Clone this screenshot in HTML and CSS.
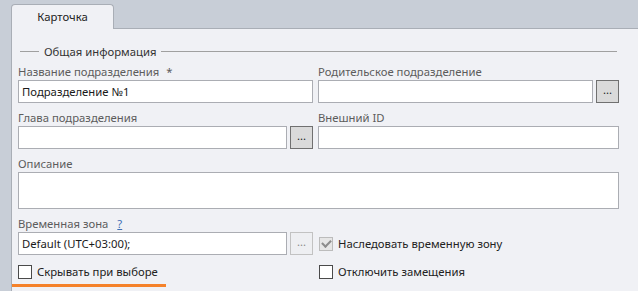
FILE: index.html
```html
<!DOCTYPE html>
<html lang="ru">
<head>
    <meta charset="UTF-8">
    <title>Карточка подразделения</title>
    <link rel="stylesheet" href="styles.css">
</head>
<body>
    <div class="tabs">
        <div class="tab">Карточка</div>
    </div>
    <div class="panel">
        <div class="legend"><span>Общая информация</span></div>
        <div class="grid">
            <div class="field">
                <label>Название подразделения <span class="req">*</span></label>
                <input type="text" value="Подразделение №1" readonly>
            </div>
            <div class="field">
                <label>Родительское подразделение</label>
                <div class="picker">
                    <input type="text" readonly>
                    <button>...</button>
                </div>
            </div>
            <div class="field">
                <label>Глава подразделения</label>
                <div class="picker">
                    <input type="text" readonly>
                    <button>...</button>
                </div>
            </div>
            <div class="field">
                <label>Внешний ID</label>
                <input type="text" readonly>
            </div>
            <div class="field wide">
                <label>Описание</label>
                <textarea readonly></textarea>
            </div>
            <div class="field">
                <label>Временная зона <a class="help">?</a></label>
                <div class="picker">
                    <input type="text" value="Default (UTC+03:00);" readonly>
                    <button disabled>...</button>
                </div>
            </div>
            <div class="field inherit">
                <div class="check">
                    <span class="box checked"></span>
                    <span>Наследовать временную зону</span>
                </div>
            </div>
            <div class="check-row">
                <div class="check focused">
                    <span class="box"></span>
                    <span>Скрывать при выборе</span>
                </div>
            </div>
            <div class="check-row">
                <div class="check">
                    <span class="box"></span>
                    <span>Отключить замещения</span>
                </div>
            </div>
        </div>
    </div>
</body>
</html>
```

FILE: styles.css
```css
html, body {
    margin: 0;
    height: 291px;
    overflow: hidden;
}
body {
    display: flex;
    flex-direction: column;
    background: #c8ced7;
    font-family: "Noto Sans", "Open Sans", sans-serif;
    font-size: 11.3px;
    color: #5c5c5c;
}
.tabs {
    display: flex;
    padding: 4px 0 0 11px;
}
.tab {
    width: 101px;
    height: 24px;
    line-height: 23px;
    text-align: center;
    color: #222222;
    background: #f0f1f5;
    border: 1px solid #a9aeb6;
    border-bottom: none;
    border-radius: 4px 4px 0 0;
    margin-bottom: -1px;
    position: relative;
    z-index: 1;
}
.panel {
    flex: 1;
    margin-left: 11px;
    background: #f0f1f5;
    border-top: 1px solid #a9aeb6;
    border-left: 1px solid #a9aeb6;
    padding: 14px 19px 0 6px;
}
.legend {
    display: flex;
    align-items: center;
    height: 16px;
    padding-left: 2px;
    margin-right: 2px;
    color: #333333;
}
.legend::before {
    content: "";
    width: 19px;
    border-top: 1px solid #a0a0a0;
    margin-right: 5px;
}
.legend::after {
    content: "";
    flex: 1;
    border-top: 1px solid #a0a0a0;
    margin-left: 5px;
}
.grid {
    display: grid;
    grid-template-columns: 295px 301px;
    column-gap: 5px;
    margin-top: 4px;
}
.field {
    display: flex;
    flex-direction: column;
    margin-bottom: 6px;
}
.field.wide {
    grid-column: 1 / 3;
}
label {
    line-height: 17px;
    height: 17px;
}
.req {
    margin-left: 4px;
}
.help {
    color: #3f6fb5;
    text-decoration: underline;
    margin-left: 6px;
}
input, textarea {
    box-sizing: border-box;
    height: 23px;
    width: 100%;
    margin: 0;
    padding: 0 3px;
    border: 1px solid #abadb3;
    background: #ffffff;
    font-family: inherit;
    font-size: 11.3px;
    color: #1a1a1a;
    outline: none;
}
textarea {
    height: 37px;
    resize: none;
}
.picker {
    display: flex;
    gap: 3px;
}
.picker input {
    flex: 1;
    width: auto;
}
button {
    box-sizing: border-box;
    width: 23px;
    height: 23px;
    padding: 0 0 4px;
    border: 1px solid #707070;
    background: #dadada;
    font-family: inherit;
    font-size: 11.3px;
    color: #222222;
}
button:disabled {
    border-color: #c2c2c2;
    background: #eeeff2;
    color: #8a8a8a;
}
.inherit {
    justify-content: flex-end;
}
.inherit .check {
    height: 23px;
}
.check {
    display: flex;
    align-items: center;
    gap: 5px;
    color: #222222;
    padding-left: 1px;
}
.check-row {
    margin-top: 3px;
}
.box {
    box-sizing: border-box;
    width: 14px;
    height: 14px;
    border: 1px solid #4a4a4a;
    background: #ffffff;
    display: flex;
    align-items: center;
    justify-content: center;
}
.box.checked {
    border-color: #bcbcbc;
    background: #e6e6e6;
}
.box.checked::after {
    content: "";
    width: 7px;
    height: 4px;
    border-left: 2px solid #8c8c8c;
    border-bottom: 2px solid #8c8c8c;
    transform: rotate(-45deg) translate(1px, -1px);
}
.focused {
    margin-left: -6px;
    padding: 0 8px 5px 6px;
    width: fit-content;
    border-bottom: 3px solid #f5822a;
}
```
